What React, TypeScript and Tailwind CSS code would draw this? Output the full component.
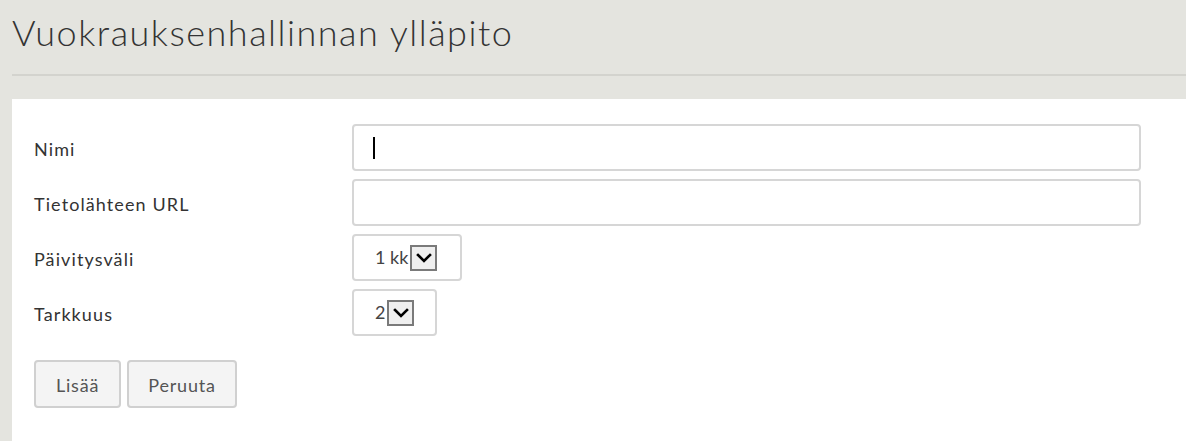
import React from "react";

function Chevron() {
  return (
    <svg width="16" height="10" viewBox="0 0 16 10" fill="none">
      <path d="M2 2 L8 8 L14 2" stroke="#000" strokeWidth="2.6" strokeLinecap="square" />
    </svg>
  );
}

function FakeSelect({ value, width }: { value: string; width: string }) {
  return (
    <div className={`h-[47px] ${width} border-2 border-[#d6d6d6] rounded-[4px] bg-white flex items-center pl-[21px]`}>
      <span className="text-[18px] text-[#444] font-['Lato',sans-serif]">{value}</span>
      <span className="ml-[2px] w-[27px] h-[26px] border-2 border-[#7a7a7a] bg-[#efefef] flex items-center justify-center">
        <Chevron />
      </span>
    </div>
  );
}

const labelCls = "w-[318px] text-[18px] tracking-[1.1px] pt-[4px] text-[#333]";

export default function App() {
  return (
    <div className="min-h-[441px] bg-[#e4e4df] font-['Lato',sans-serif] text-[#333] overflow-hidden">
      <div className="pl-[12px] pt-[10px]">
        <h1 className="text-[36px] leading-[44px] text-[#333] font-light tracking-[1.5px]">Vuokrauksenhallinnan ylläpito</h1>
        <div className="mt-[20px] h-[2px] bg-[#d3d3ce]" />
        <div className="mt-[23px] bg-white pl-[22px] pt-[25px] pb-[40px]">
          <div className="flex flex-col gap-[8px]">
            <div className="flex items-center h-[47px]">
              <label className={labelCls}>Nimi</label>
              <div className="h-[47px] w-[789px] border-2 border-[#d6d6d6] rounded-[4px] flex items-center pl-[19px]">
                <span className="w-[2px] h-[22px] bg-black" />
              </div>
            </div>
            <div className="flex items-center h-[47px]">
              <label className={labelCls}>Tietolähteen URL</label>
              <div className="h-[47px] w-[789px] border-2 border-[#d6d6d6] rounded-[4px]" />
            </div>
            <div className="flex items-center h-[47px]">
              <label className={labelCls}>Päivitysväli</label>
              <FakeSelect value="1 kk" width="w-[110px]" />
            </div>
            <div className="flex items-center h-[47px]">
              <label className={labelCls}>Tarkkuus</label>
              <FakeSelect value="2" width="w-[85px]" />
            </div>
          </div>
          <div className="flex gap-[6px] mt-[24px]">
            <button className="h-[48px] w-[87px] border-2 border-[#d0d0d0] rounded-[4px] bg-[#f4f4f4] text-[18px] text-[#555] tracking-[0.8px] pt-[2px]">Lisää</button>
            <button className="h-[48px] w-[110px] border-2 border-[#d0d0d0] rounded-[4px] bg-[#f4f4f4] text-[18px] text-[#555] tracking-[0.8px] pt-[2px]">Peruuta</button>
          </div>
        </div>
      </div>
    </div>
  );
}
